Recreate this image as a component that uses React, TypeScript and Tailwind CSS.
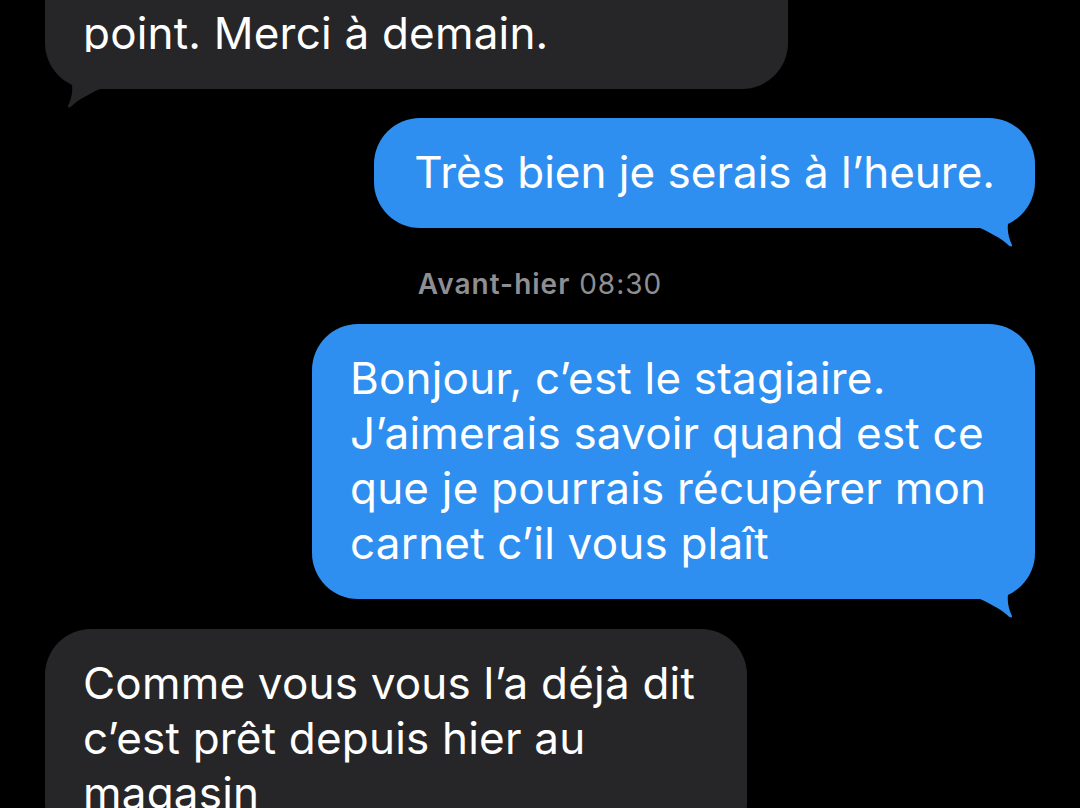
import React from "react";

// Bubble tail drawn at the bottom corner of a message bubble.
function Tail({ color, side }: { color: string; side: "left" | "right" }) {
  const pos =
    side === "right"
      ? "absolute right-0 bottom-[-19px]"
      : "absolute left-0 bottom-[-19px] -scale-x-100";
  return (
    <svg className={pos} width="60" height="56" viewBox="0 0 60 56" aria-hidden="true">
      <path
        d="M0 0 L0 37 L5 37 C14 41 25 47 31 52 C34 55 37 57 37 54 C34 48 32 40 33 33 C36 26 46 19 52 13 C55 9 57 5 58 0 Z"
        fill={color}
      />
    </svg>
  );
}

const BLUE = "#2e8ff0";
const GRAY = "#262628";

export default function App() {
  return (
    <div className="w-[1080px] h-[808px] overflow-hidden bg-black text-white font-['Inter','Noto_Sans',sans-serif]">
      <div className="flex flex-col px-[45px]">
        {/* incoming: end of previous message */}
        <div className="relative self-start mt-[-82px] w-[743px] rounded-[46px] bg-[#262628] pl-[38px] pr-[38px] pt-[88px] pb-[27.5px] text-[44px] leading-[55px] tracking-[0.2px]">
          point. Merci à demain.
          <Tail color={GRAY} side="left" />
        </div>

        {/* outgoing */}
        <div className="relative self-end mt-[29px] rounded-[46px] bg-[#2e8ff0] pl-[40px] pr-[40px] py-[27.5px] text-[44px] leading-[55px] tracking-[0px] whitespace-nowrap">
          Très bien je serais à l’heure.
          <Tail color={BLUE} side="right" />
        </div>

        <div className="mt-[39px] text-center text-[28px] leading-[34px] tracking-[1px] text-[#8e8e93]">
          <span className="font-semibold">Avant-hier</span> 08:30
        </div>

        <div className="relative self-end mt-[23px] w-[723px] rounded-[46px] bg-[#2e8ff0] px-[38px] py-[27.5px] text-[44px] leading-[55px] tracking-[0.2px] whitespace-nowrap">
          Bonjour, c’est le stagiaire.
          <br />
          J’aimerais savoir quand est ce
          <br />
          que je pourrais récupérer mon
          <br />
          carnet c’il vous plaît
          <Tail color={BLUE} side="right" />
        </div>

        {/* incoming reply */}
        <div className="relative self-start mt-[30px] w-[702px] rounded-[46px] bg-[#262628] px-[38px] py-[27.5px] text-[44px] leading-[55px] tracking-[0.2px] whitespace-nowrap">
          Comme vous vous l’a déjà dit
          <br />
          c’est prêt depuis hier au
          <br />
          magasin
        </div>
      </div>
    </div>
  );
}
